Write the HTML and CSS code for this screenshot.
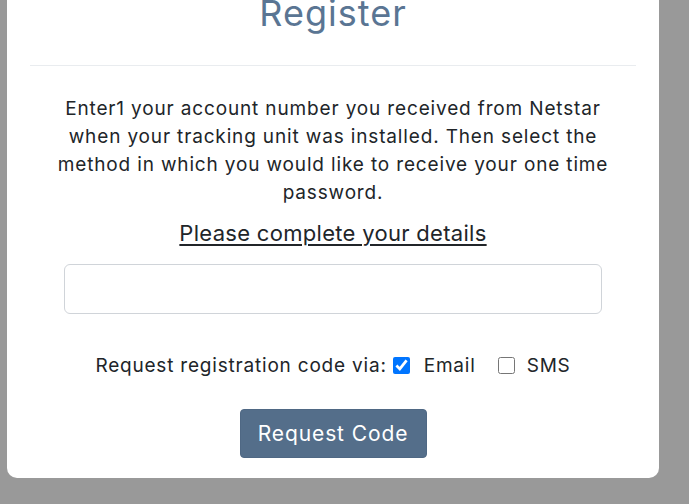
FILE: index.html
```html
<!DOCTYPE html>
<html>
<head>
<meta charset="utf-8">
<title>Register</title>
<link rel="stylesheet" href="styles.css">
</head>
<body>
<div class="modal">
  <div class="card">
    <div class="card-header">
      <h1 class="title">Register</h1>
    </div>
    <div class="card-body">
      <p class="intro">Enter1 your account number you received from Netstar when your tracking unit was installed. Then select the method in which you would like to receive your one time password.</p>
      <h2 class="subtitle">Please complete your details</h2>
      <input class="account-input" type="text" aria-label="Account number">
      <div class="method-row">
        <span class="method-label">Request registration code via:</span>
        <label class="option option-email"><input type="checkbox" class="check" checked><span>Email</span></label>
        <label class="option option-sms"><input type="checkbox" class="check"><span>SMS</span></label>
      </div>
      <button class="btn-request" type="button">Request Code</button>
    </div>
  </div>
</div>
</body>
</html>
```
FILE: styles.css
```css
html, body {
  margin: 0;
  padding: 0;
  height: 100%;
  overflow: hidden;
}
body {
  background: #999999;
  font-family: "Inter", "Open Sans", sans-serif;
  color: #212529;
}
.modal {
  margin-left: 7px;
  width: 652px;
}
.card {
  background: #ffffff;
  border-radius: 0 0 10px 10px;
  padding-bottom: 20px;
}
.card-header {
  margin: 0 23px;
  padding-bottom: 39px;
  border-bottom: 1px solid #e9ecef;
  text-align: center;
}
.title {
  margin: 0;
  font-size: 36px;
  line-height: 26px;
  font-weight: 400;
  letter-spacing: 1px;
  color: #5a7593;
}
.card-body {
  display: flex;
  flex-direction: column;
  align-items: center;
  padding-top: 29px;
}
.intro {
  margin: 0;
  width: 565px;
  text-align: center;
  font-size: 19px;
  line-height: 28px;
  letter-spacing: 0.85px;
}
.subtitle {
  margin: 11px 0 0;
  font-size: 22px;
  line-height: 30px;
  font-weight: 400;
  letter-spacing: 0.3px;
  text-decoration: underline;
  text-decoration-thickness: 2px;
  text-underline-offset: 3px;
}
.account-input {
  box-sizing: border-box;
  margin-top: 16px;
  width: 538px;
  height: 50px;
  border: 1px solid #d0d4d9;
  border-radius: 6px;
  background: #fff;
  font: inherit;
  padding: 0 12px;
}
.method-row {
  margin-top: 37px;
  display: flex;
  align-items: center;
  height: 28px;
  font-size: 19px;
  letter-spacing: 0.8px;
}
.method-label {
  margin-right: 6px;
}
.option {
  display: flex;
  align-items: center;
}
.option-email {
  margin-right: 22px;
}
.option-email .check {
  margin: 0 14px 0 0;
}
.option-sms .check {
  margin: 0 12px 0 0;
}
.check {
  width: 17px;
  height: 17px;
}
.btn-request {
  margin-top: 30px;
  width: 187px;
  height: 49px;
  border: 1px solid #4f6884;
  border-radius: 4px;
  background: #546e8a;
  color: #ffffff;
  font-family: "Inter", "Open Sans", sans-serif;
  font-size: 21px;
  letter-spacing: 0.9px;
  padding: 0;
}
```
